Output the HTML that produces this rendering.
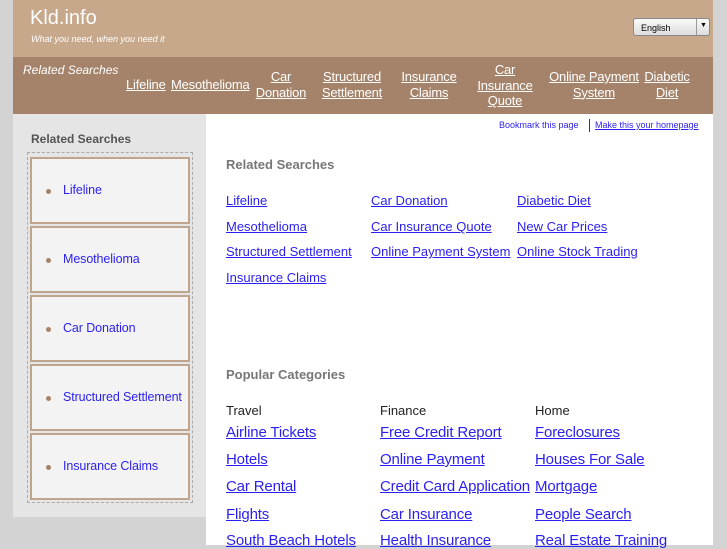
<!DOCTYPE html>
<html><head><meta charset="utf-8"><style>
*{margin:0;padding:0;box-sizing:border-box}
body{width:727px;height:545px;background:#d3d3d3;font-family:"Liberation Sans",sans-serif;position:relative;overflow:hidden}
.a{position:absolute}
a{color:#2a1ff0;text-decoration:underline;white-space:nowrap}
#hd{left:13px;top:0;width:700px;height:57px;background:#c8a88b}
#nav{left:13px;top:57px;width:700px;height:57px;background:#a4836a}
#side{left:13px;top:114px;width:193px;height:403px;background:#e5e5e5}
#main{left:206px;top:114px;width:507px;height:431px;background:#fff}
.nl{color:#fff;font-size:13px;text-align:center;line-height:15.5px;position:absolute;letter-spacing:-0.2px}
.nl a{color:#fff}
.box{position:absolute;left:30px;width:160px;height:67px;border:2px solid #bfa48e;background:#f3f3f3;font-size:12.5px;color:#2a1ff0;padding-left:31px;line-height:63px;white-space:nowrap;overflow:hidden;letter-spacing:-0.1px}
.box:before{content:"";position:absolute;left:14px;top:30px;width:5px;height:5px;border-radius:50%;background:#a4836a}
.rl{position:absolute;font-size:13px}
.cl{position:absolute;font-size:15px;letter-spacing:-0.15px}
.ch{position:absolute;font-size:13px;color:#222}
h3{position:absolute;font-size:13px;color:#777;font-weight:bold}
</style></head><body>
<div id="hd" class="a"></div>
<div class="a" style="left:30px;top:7px;color:#fff;font-size:20px">Kld.info</div>
<div class="a" style="left:31px;top:34px;color:#fff;font-size:9px;font-style:italic">What you need, when you need it</div>
<div class="a" style="left:633px;top:18px;width:77px;height:18px;border:1px solid #888;border-radius:3px;background:linear-gradient(#fafafa,#ddd);font-size:9px;padding:4px 0 0 7px">English<span style="position:absolute;left:62px;top:0;width:1px;height:16px;background:#999"></span><span style="position:absolute;left:66px;top:3px;font-size:7px">▼</span></div>
<div id="nav" class="a"></div>
<div class="a" style="left:23px;top:63px;color:#fff;font-size:12px;font-style:italic">Related Searches</div>
<div class="nl" style="left:126px;top:77px"><a>Lifeline</a></div>
<div class="nl" style="left:171px;top:77px"><a>Mesothelioma</a></div>
<div class="nl" style="left:255px;top:69px;width:52px"><a>Car<br>Donation</a></div>
<div class="nl" style="left:320px;top:69px;width:64px"><a>Structured<br>Settlement</a></div>
<div class="nl" style="left:398px;top:69px;width:62px"><a>Insurance<br>Claims</a></div>
<div class="nl" style="left:474px;top:62px;width:62px"><a>Car<br>Insurance<br>Quote</a></div>
<div class="nl" style="left:547px;top:69px;width:94px"><a>Online Payment<br>System</a></div>
<div class="nl" style="left:643px;top:69px;width:48px"><a>Diabetic<br>Diet</a></div>
<div id="side" class="a"></div>
<div class="a" style="left:31px;top:132px;font-size:12px;font-weight:bold;color:#555">Related Searches</div>
<div class="a" style="left:27px;top:152px;width:166px;height:351px;border:1px dashed #aaa"></div>
<div class="box" style="top:157px">Lifeline</div>
<div class="box" style="top:226px">Mesothelioma</div>
<div class="box" style="top:295px">Car Donation</div>
<div class="box" style="top:364px">Structured Settlement</div>
<div class="box" style="top:433px">Insurance Claims</div>
<div id="main" class="a"></div>
<div class="a" style="left:499px;top:120px;font-size:9px;color:#2a1ff0">Bookmark this page</div>
<div class="a" style="left:589px;top:119px;width:1px;height:13px;background:#2a1ff0"></div>
<div class="a" style="left:595px;top:120px;font-size:9px"><a>Make this your homepage</a></div>
<h3 style="left:226px;top:157px">Related Searches</h3>
<a class="rl" style="left:226px;top:193px">Lifeline</a>
<a class="rl" style="left:226px;top:219px">Mesothelioma</a>
<a class="rl" style="left:226px;top:244px">Structured Settlement</a>
<a class="rl" style="left:226px;top:270px">Insurance Claims</a>
<a class="rl" style="left:371px;top:193px">Car Donation</a>
<a class="rl" style="left:371px;top:219px">Car Insurance Quote</a>
<a class="rl" style="left:371px;top:244px">Online Payment System</a>
<a class="rl" style="left:517px;top:193px">Diabetic Diet</a>
<a class="rl" style="left:517px;top:219px">New Car Prices</a>
<a class="rl" style="left:517px;top:244px">Online Stock Trading</a>
<h3 style="left:226px;top:367px">Popular Categories</h3>
<div class="ch" style="left:226px;top:403px">Travel</div>
<div class="ch" style="left:380px;top:403px">Finance</div>
<div class="ch" style="left:535px;top:403px">Home</div>
<a class="cl" style="left:226px;top:424px">Airline Tickets</a>
<a class="cl" style="left:226px;top:451px">Hotels</a>
<a class="cl" style="left:226px;top:478px">Car Rental</a>
<a class="cl" style="left:226px;top:506px">Flights</a>
<a class="cl" style="left:226px;top:532px">South Beach Hotels</a>
<a class="cl" style="left:380px;top:424px">Free Credit Report</a>
<a class="cl" style="left:380px;top:451px">Online Payment</a>
<a class="cl" style="left:380px;top:478px">Credit Card Application</a>
<a class="cl" style="left:380px;top:506px">Car Insurance</a>
<a class="cl" style="left:380px;top:532px">Health Insurance</a>
<a class="cl" style="left:535px;top:424px">Foreclosures</a>
<a class="cl" style="left:535px;top:451px">Houses For Sale</a>
<a class="cl" style="left:535px;top:478px">Mortgage</a>
<a class="cl" style="left:535px;top:506px">People Search</a>
<a class="cl" style="left:535px;top:532px">Real Estate Training</a>
</body></html>
